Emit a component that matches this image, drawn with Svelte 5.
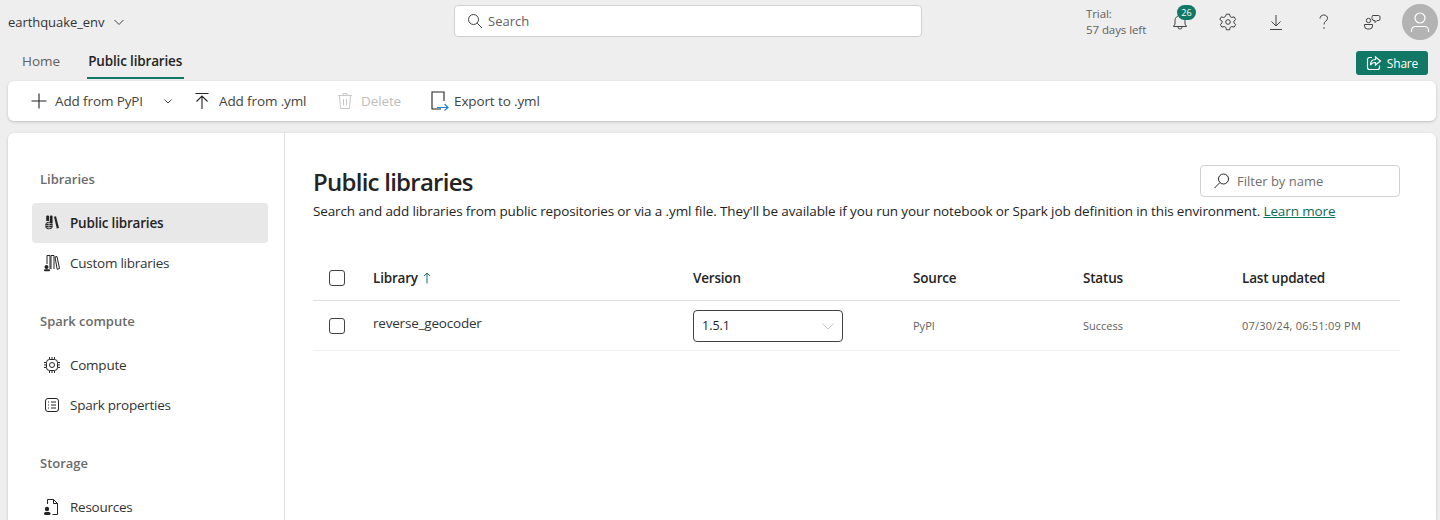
<script>
  const columns = ['Version', 'Source', 'Status', 'Last updated'];

  const row = {
    name: 'reverse_geocoder',
    version: '1.5.1',
    source: 'PyPI',
    status: 'Success',
    updated: '07/30/24, 06:51:09 PM'
  };
</script>

<div class="page">
  <header class="topbar">
    <div class="env">
      <span>earthquake_env</span>
      <svg width="12" height="12" viewBox="0 0 12 12"><path d="M1.500 4l4.500 4.500L10.500 4" class="line" /></svg>
    </div>
    <div class="search">
      <svg width="16" height="16" viewBox="0 0 16 16"><circle cx="6.5" cy="6.5" r="5" class="line" /><path d="M10.2 10.2L15 15" class="line" /></svg>
      <span>Search</span>
    </div>
    <div class="top-right">
      <div class="trial">Trial:<br />57 days left</div>
      <div class="icon-btn bell">
        <svg width="18" height="18" viewBox="0 0 18 18"><path d="M4 7.5a5 5 0 0 1 10 0v3.5l1.5 2.5h-13L4 11zM7 14a2 2 0 0 0 4 0" class="line" /></svg>
        <span class="badge">26</span>
      </div>
      <div class="icon-btn">
        <svg width="18" height="18" viewBox="0 0 18 18"><path d="M7.4 1.2h3.2l.5 2.3 1.7 1 2.3-.7 1.6 2.7-1.8 1.6v1.8l1.8 1.6-1.6 2.7-2.3-.7-1.7 1-.5 2.3H7.4l-.5-2.3-1.7-1-2.3.7-1.6-2.7 1.8-1.6V8.1L.8 6.5l1.6-2.7 2.3.7 1.7-1z" class="line" /><circle cx="9" cy="9" r="2.3" class="line" /></svg>
      </div>
      <div class="icon-btn">
        <svg width="18" height="18" viewBox="0 0 18 18"><path d="M9 2v11M4.5 8.5L9 13l4.500-4.500M3 16.500h12" class="line" /></svg>
      </div>
      <div class="icon-btn">
        <svg width="18" height="18" viewBox="0 0 18 18"><path d="M5 5.500C5 3.500 6.500 2 8.800 2s3.700 1.500 3.700 3.300c0 2.700-3.500 2.900-3.500 6.200" class="line" /><circle cx="9" cy="15" r=".8" fill="#424242" /></svg>
      </div>
      <div class="icon-btn">
        <svg width="18" height="18" viewBox="0 0 18 18"><circle cx="5.500" cy="7.500" r="2.200" class="line" /><path d="M1.500 11.500h8v1.500a3 3 0 0 1-3 3h-2a3 3 0 0 1-3-3z" class="line" /><path d="M9.500 2.500h6a1.500 1.500 0 0 1 1.500 1.500v2a1.500 1.500 0 0 1-1.500 1.500h-1.500l-2 2v-2h-1a2 2 0 0 1-2-2v-1a2 2 0 0 1 .500-1.500z" class="line" /></svg>
      </div>
      <div class="avatar">
        <svg width="24" height="24" viewBox="0 0 24 24"><circle cx="12" cy="8" r="5" class="white" /><path d="M3.500 22v-1.500a4 4 0 0 1 4-4h9a4 4 0 0 1 4 4V22" class="white" /></svg>
      </div>
    </div>
  </header>

  <div class="tabs">
    <nav class="tab-list">
      <span class="tab">Home</span>
      <span class="tab active">Public libraries</span>
    </nav>
    <button class="share">
      <svg width="16" height="16" viewBox="0 0 16 16"><path d="M6 2.500H3.500a2 2 0 0 0-2 2v8a2 2 0 0 0 2 2h8a2 2 0 0 0 2-2v-2M9.500 2v2.500c-3 0-5 1.500-5 5.500 1-2 2.500-2.500 5-2.500V10l5-4z" class="white" /></svg>
      Share
    </button>
  </div>

  <div class="toolbar">
    <span class="tool add">
      <svg width="18" height="18" viewBox="0 0 18 18"><path d="M9 1.500v15M1.500 9h15" class="dark" /></svg>
      Add from PyPI
      <svg class="caret" width="10" height="10" viewBox="0 0 10 10"><path d="M1.500 3.500L5 7l3.500-3.500" class="line" /></svg>
    </span>
    <span class="tool yml">
      <svg width="18" height="18" viewBox="0 0 18 18"><path d="M2.500 1.500h13M9 17V4M3.500 9.500L9 4l5.500 5.500" class="dark" /></svg>
      Add from .yml
    </span>
    <span class="tool disabled">
      <svg width="18" height="18" viewBox="0 0 18 18"><path d="M2 3.500h14M7 3.500V1.500h4v2M3.500 3.500l1 13h9l1-13M7.500 7v6.500M10.500 7v6.500" class="faint" /></svg>
      Delete
    </span>
    <span class="tool export">
      <svg width="18" height="20" viewBox="0 0 18 20"><path d="M13 10V1H1v17h9" class="dark" /><path d="M6 16.500h11M13.500 13l3.500 3.500-3.500 3" class="blue" /></svg>
      Export to .yml
    </span>
  </div>

  <main class="card">
    <aside class="side">
      <h4>Libraries</h4>
      <div class="nav-item selected">
        <svg width="18" height="18" viewBox="0 0 18 18"><path d="M3.200 2.500a1 1 0 0 1 1-1h.800a1 1 0 0 1 1 1V7H3.200zM6.800 2.500a1 1 0 0 1 1-1h.800a1 1 0 0 1 1 1V9H6.800zM11 2.800l2-.5L16 14l-2.200.5z" class="solid" /><circle cx="6" cy="11.500" r="3.800" class="solid" /><path d="M2.300 11.500h7.400M6 7.700v7.600M3.500 9.500h5M3.500 13.500h5" stroke="#e8e8e8" stroke-width=".6" /></svg>
        Public libraries
      </div>
      <div class="nav-item">
        <svg width="18" height="18" viewBox="0 0 18 18"><path d="M4 10V1.500h3V15M8 15V1.500h3V15M12 3l2-.5 2.500 12-2.300.800z" class="dark thin" /><circle cx="3.500" cy="13" r="2" class="solid" /><rect x="1" y="15.300" width="6" height="2" rx="1" class="solid" /></svg>
        Custom libraries
      </div>

      <h4 class="group">Spark compute</h4>
      <div class="nav-item">
        <svg width="18" height="18" viewBox="0 0 18 18"><rect x="3.500" y="3.500" width="11" height="11" rx="3" class="dark thin" /><circle cx="9" cy="9" r="2.500" class="dark thin" /><path d="M6.500 1v2M9 1v2M11.500 1v2M6.500 15v2M9 15v2M11.500 15v2M1 6.500h2M1 9h2M1 11.500h2M15 6.500h2M15 9h2M15 11.500h2" class="dark thin" /></svg>
        Compute
      </div>
      <div class="nav-item">
        <svg width="18" height="18" viewBox="0 0 18 18"><rect x="2.500" y="2.500" width="13" height="13" rx="2.500" class="dark thin" /><path d="M8 6h5M8 9h5M8 12h5M5 6h1M5 9h1M5 12h1" class="dark thin" /></svg>
        Spark properties
      </div>

      <h4 class="group">Storage</h4>
      <div class="nav-item">
        <svg width="18" height="18" viewBox="0 0 18 18"><path d="M4.500 6V1.500h6l4 4v11h-5M10.500 1.500v4h4" class="dark thin" /><circle cx="4" cy="11" r="2.200" class="solid" /><rect x="1" y="14" width="6.500" height="3" rx="1.500" class="solid" /></svg>
        Resources
      </div>
    </aside>

    <section class="content">
      <div class="head">
        <div>
          <h1>Public libraries</h1>
          <p>Search and add libraries from public repositories or via a .yml file. They'll be available if you run your notebook or Spark job definition in this environment. <a href="#learn">Learn more</a></p>
        </div>
        <div class="filter">
          <svg width="18" height="18" viewBox="0 0 18 18"><circle cx="10.500" cy="7" r="5" class="dark thin" /><path d="M7 10.500L1.500 16" class="dark thin" /></svg>
          <span>Filter by name</span>
        </div>
      </div>

      <div class="table">
        <div class="tr th">
          <div class="c-check"><span class="box"></span></div>
          <div class="c-name">
            Library
            <svg width="8" height="12" viewBox="0 0 8 12"><path d="M4 11.500V1M1 4l3-3 3 3" class="sort" /></svg>
          </div>
          {#each columns as col}
            <div>{col}</div>
          {/each}
        </div>
        <div class="tr td">
          <div class="c-check"><span class="box"></span></div>
          <div class="name-cell">{row.name}</div>
          <div>
            <div class="select">
              <span>{row.version}</span>
              <svg width="14" height="14" viewBox="0 0 14 14"><path d="M1.500 4.500L7 10l5.500-5.500" class="faint" /></svg>
            </div>
          </div>
          <div class="small">{row.source}</div>
          <div class="small">{row.status}</div>
          <div class="small date">{row.updated}</div>
        </div>
      </div>
    </section>
  </main>
</div>

<style>
  :global(body) {
    margin: 0;
    background: #eeeeee;
    font-family: "Open Sans", "Noto Sans", sans-serif;
    color: #242424;
    overflow: hidden;
  }

  svg {
    flex: none;
    fill: none;
    display: block;
  }
  .line { stroke: #424242; stroke-width: 1; fill: none; }
  .white { stroke: #fff; stroke-width: 1.2; fill: none; }
  .dark { stroke: #242424; stroke-width: 1.1; fill: none; }
  .thin { stroke-width: 1; }
  .faint { stroke: #c8c8c8; stroke-width: 1; fill: none; }
  .blue { stroke: #1b85e0; stroke-width: 1.2; fill: none; }
  .solid { fill: #242424; stroke: none; }
  .sort { stroke: #117865; stroke-width: 1; fill: none; }

  .page {
    height: 520px;
    display: flex;
    flex-direction: column;
    overflow: hidden;
  }

  .topbar {
    height: 44px;
    flex: none;
    display: grid;
    grid-template-columns: 446px 468px 1fr;
    align-items: center;
    padding-left: 8px;
  }

  .env {
    display: flex;
    align-items: center;
    gap: 9px;
    font-size: 13px;
    letter-spacing: -0.05px;
    color: #333;
  }

  .search {
    height: 32px;
    box-sizing: border-box;
    background: #fff;
    border: 1px solid #d1d1d1;
    border-radius: 4px;
    display: flex;
    align-items: center;
    gap: 5px;
    padding-left: 12px;
    font-size: 13px;
    color: #616161;
    margin-top: -2px;
  }

  .top-right {
    display: flex;
    align-items: center;
    justify-content: flex-end;
    height: 44px;
  }
  .trial {
    font-size: 11.5px;
    line-height: 16px;
    color: #616161;
    width: 66px;
    margin-right: 4px;
    letter-spacing: -0.08px;
  }
  .icon-btn {
    width: 48px;
    height: 44px;
    display: flex;
    align-items: center;
    justify-content: center;
    position: relative;
    flex: none;
  }
  .bell svg { margin-top: -1px; }
  .badge {
    position: absolute;
    left: 21px;
    top: 5px;
    width: 19px;
    height: 15px;
    border-radius: 8px;
    background: #117865;
    color: #fff;
    font-size: 9px;
    line-height: 15px;
    text-align: center;
  }
  .avatar {
    width: 36px;
    height: 36px;
    border-radius: 50%;
    background: #b3b3b3;
    display: flex;
    align-items: center;
    justify-content: center;
    margin: 0 2px 0 6px;
  }

  .tabs {
    height: 34px;
    flex: none;
    display: flex;
    justify-content: space-between;
    align-items: flex-start;
    padding: 0 12px 0 22px;
  }
  .tab-list {
    display: flex;
    gap: 28px;
  }
  .tab {
    font-size: 13.5px;
    line-height: 34px;
    height: 33px;
    color: #616161;
  }
  .tab.active {
    font-weight: 600;
    color: #242424;
    border-bottom: 2px solid #117865;
    padding: 0 2px 0 1px;
    margin-left: -1px;
    letter-spacing: -0.16px;
  }
  .share {
    margin-top: 7px;
    width: 72px;
    height: 24px;
    background: #117865;
    color: #fff;
    border: 0;
    border-radius: 3px;
    font: 12px "Open Sans", sans-serif;
    letter-spacing: -0.2px;
    display: flex;
    align-items: center;
    justify-content: center;
    gap: 5px;
    padding: 0;
  }

  .toolbar {
    margin: 3px 4px 0 8px;
    height: 40px;
    flex: none;
    background: #fff;
    border-radius: 6px;
    box-shadow: 0 1px 3px rgba(0, 0, 0, 0.2);
    display: flex;
    align-items: center;
    font-size: 13.5px;
    padding-left: 22px;
  }
  .tool {
    display: flex;
    align-items: center;
    gap: 7px;
    color: #424242;
    letter-spacing: -0.12px;
  }
  .add { width: 163px; }
  .caret { margin-left: 13px; }
  .yml { width: 143px; gap: 8px; }
  .disabled { color: #bdbdbd; width: 95px; gap: 7px; }
  .export { gap: 5px; }

  .card {
    margin: 12px 4px 0 8px;
    flex: 1;
    background: #fff;
    border-radius: 6px 6px 0 0;
    box-shadow: 0 1px 3px rgba(0, 0, 0, 0.2);
    display: flex;
    min-height: 0;
  }

  .side {
    width: 277px;
    flex: none;
    box-sizing: border-box;
    border-right: 1px solid #e0e0e0;
    padding: 36px 16px 0 24px;
  }
  .side h4 {
    margin: 0 0 14px 8px;
    height: 20px;
    font-size: 13px;
    line-height: 20px;
    font-weight: 600;
    color: #6b6b6b;
    letter-spacing: -0.02px;
  }
  .side h4.group { margin-top: 28px; }
  .nav-item {
    height: 40px;
    display: flex;
    align-items: center;
    gap: 9px;
    padding-left: 11px;
    border-radius: 4px;
    font-size: 13.5px;
    color: #333;
    letter-spacing: -0.25px;
  }
  .nav-item svg { width: 18px; }
  .nav-item.selected {
    background: #e8e8e8;
    font-weight: 600;
    color: #242424;
    letter-spacing: -0.2px;
  }

  .content {
    flex: 1;
    padding: 32px 36px 0 28px;
    min-width: 0;
  }
  .head {
    display: flex;
    justify-content: space-between;
    position: relative;
  }
  h1 {
    margin: 0;
    font-size: 24px;
    line-height: 34px;
    font-weight: 600;
    letter-spacing: -0.75px;
    color: #242424;
  }
  p {
    margin: 3px 0 0;
    font-size: 13.5px;
    line-height: 18px;
    letter-spacing: -0.12px;
    white-space: nowrap;
    color: #242424;
  }
  a {
    color: #0f6c5a;
    text-decoration: underline;
  }
  .filter {
    position: absolute;
    right: 0;
    top: 0;
    width: 200px;
    height: 32px;
    box-sizing: border-box;
    border: 1px solid #d1d1d1;
    border-radius: 4px;
    display: flex;
    align-items: center;
    gap: 6px;
    padding-left: 12px;
    font-size: 13px;
    color: #707070;
    background: #fff;
  }

  .table {
    margin-top: 36px;
  }
  .tr {
    display: grid;
    grid-template-columns: 60px 320px 220px 170px 159px 1fr;
    align-items: center;
    border-bottom: 1px solid #e0e0e0;
  }
  .th {
    height: 44px;
    font-size: 13.5px;
    font-weight: 600;
    letter-spacing: -0.2px;
  }
  .c-name {
    display: flex;
    align-items: center;
    gap: 5px;
  }
  .td {
    height: 49px;
    border-bottom-color: #f0f0f0;
    font-size: 13.5px;
  }
  .c-check {
    padding-left: 16px;
    display: flex;
  }
  .box {
    width: 16px;
    height: 16px;
    box-sizing: border-box;
    border: 1px solid #424242;
    border-radius: 3px;
  }
  .name-cell {
    color: #333;
    margin-top: -6px;
    letter-spacing: -0.2px;
  }
  .select {
    width: 150px;
    height: 32px;
    box-sizing: border-box;
    border: 1px solid #424242;
    border-radius: 4px;
    display: flex;
    align-items: center;
    justify-content: space-between;
    padding: 0 7px 0 8px;
    font-size: 12.5px;
    color: #242424;
  }
  .small {
    font-size: 11px;
    line-height: 16px;
    color: #616161;
    padding-top: 1px;
  }
  .date { letter-spacing: 0.22px; }
</style>
